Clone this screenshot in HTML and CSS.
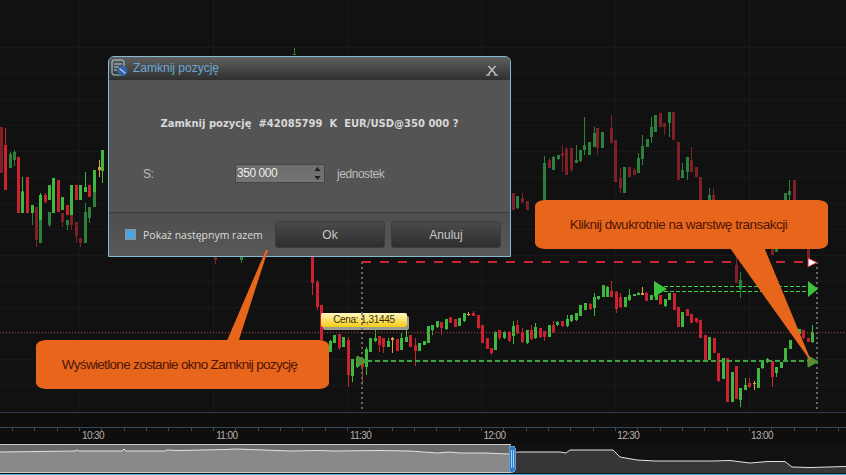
FILE: index.html
```html
<!DOCTYPE html>
<html lang="pl">
<head>
  <meta charset="UTF-8">
  <title>Zamknij pozycję</title>
  <link rel="stylesheet" href="styles.css">
</head>
<body>

  <svg class="chart" id="chart" width="846" height="475" viewBox="0 0 846 475">
    <g id="grid"></g>
    <g id="candles"></g>

    <line class="price-line" x1="0" y1="332.5" x2="846" y2="332.5"/>
    <line class="drop-line" x1="362" y1="262" x2="362" y2="412"/>
    <line class="drop-line" x1="817" y1="262" x2="817" y2="412"/>
    <line class="stop-line" x1="362" y1="262" x2="808" y2="262"/>
    <line class="open-line" x1="367" y1="360.5" x2="808" y2="360.5"/>
    <line class="limit-line" x1="664" y1="286.5" x2="808" y2="286.5"/>
    <line class="limit-line" x1="664" y1="291" x2="808" y2="291"/>

    <polygon class="arrow-white" points="808,258 817,262.5 808,267"/>
    <polygon class="arrow-bright" points="654,281 667,289 654,297"/>
    <polygon class="arrow-bright" points="808,281 818,289 808,297"/>
    <polygon class="arrow-olive" points="808,356 818,361.5 808,367"/>
    <polygon class="arrow-olive" points="357,356 367,361 357,367"/>

    <g id="axis"></g>

    <path class="overview-dark" id="overviewDark" d=""/>
    <rect class="overview-top" x="0" y="444" width="511" height="28"/>
    <path class="overview-light" id="overviewLight" d=""/>
    <path class="overview-line" id="overviewLine" d=""/>
    <line class="overview-edge" x1="0" y1="444.5" x2="511" y2="444.5"/>
    <line class="overview-edge" x1="0" y1="472.5" x2="511" y2="472.5"/>
    <line class="overview-bottom" x1="0" y1="474.5" x2="846" y2="474.5"/>

    <rect class="handle" x="509" y="446" width="6" height="26" rx="2"/>
    <line class="handle-grip" x1="511" y1="450" x2="511" y2="468"/>
    <line class="handle-grip" x1="513" y1="450" x2="513" y2="468"/>
  </svg>

  <div class="tooltip">Cena: 1,31445</div>
  <div class="tooltip-cross"></div>

  <div class="dialog">
    <div class="dialog-title">
      <svg class="dialog-icon" width="18" height="18" viewBox="0 0 18 18">
        <rect x="1" y="1" width="12" height="15" rx="2" fill="none" stroke="#a9cfe0" stroke-width="1"/>
        <path d="M3 5h8M3 8h5M3 11h3" stroke="#a9cfe0" stroke-width="1"/>
        <circle cx="11.5" cy="12" r="5" fill="#2f63a8"/>
        <path d="M8.5 9.5l6 5" stroke="#b9d4ea" stroke-width="1.2"/>
      </svg>
      <span class="dialog-name">Zamknij pozycję</span>
      <svg class="dialog-close" width="12" height="11" viewBox="0 0 12 11">
        <path d="M2.5 1l7 8M9.5 1l-7 8" stroke="#bdbdbd" stroke-width="1.5"/>
        <path d="M0 10h4M8 10h4" stroke="#eeeeee" stroke-width="1"/>
      </svg>
    </div>

    <div class="dialog-body">
      <p class="question">Zamknij pozycję&nbsp; #42085799&nbsp; K&nbsp; EUR/USD@350 000 ?</p>
      <div class="amount-row">
        <label class="amount-label">S:</label>
        <div class="spinner">
          <span>350 000</span>
          <svg class="spinner-arrows" width="7" height="15" viewBox="0 0 7 15">
            <path d="M3.5 1l3 4h-6z" fill="#1f1f1f"/>
            <path d="M3.5 14l3-4h-6z" fill="#1f1f1f"/>
          </svg>
        </div>
        <span class="amount-unit">jednostek</span>
      </div>
    </div>

    <div class="dialog-footer">
      <label class="show-next"><span class="checkbox"></span>Pokaż następnym razem</label>
      <button class="btn">Ok</button>
      <button class="btn">Anuluj</button>
    </div>
  </div>

  <div class="callout callout-left">Wyświetlone zostanie okno Zamknij pozycję</div>
  <div class="callout callout-right">Kliknij dwukrotnie na warstwę transakcji</div>

  <script src="chart.js"></script>
</body>
</html>
```

FILE: styles.css
```css
* {
  box-sizing: border-box;
}

html, body {
  margin: 0;
  padding: 0;
  width: 846px;
  height: 475px;
  overflow: hidden;
  background-color: #111111;
  font-family: "Liberation Sans", Arial, sans-serif;
}

.chart {
  position: absolute;
  left: 0;
  top: 0;
  display: block;
}

.chart rect, .chart line {
  shape-rendering: crispEdges;
}

.grid-line { stroke: #181818; stroke-width: 1; }
.axis-band { fill: #100e0c; }
.axis-line { stroke: #2b3a46; stroke-width: 1; }
.axis-line-bright { stroke: #2f4a5e; stroke-width: 1; }
.axis-tick { stroke: #4a4a4a; stroke-width: 1; }
.axis-label {
  fill: #b0b0b0;
  font-family: "Liberation Sans", Arial, sans-serif;
  font-size: 10px;
  letter-spacing: -0.6px;
  text-anchor: middle;
}

.price-line { stroke: #a8333a; stroke-width: 1; stroke-dasharray: 1 2; }
.drop-line { stroke: #666666; stroke-width: 2; stroke-dasharray: 2 3; }
.stop-line { stroke: #cc2433; stroke-width: 2; stroke-dasharray: 9 9; }
.open-line { stroke: #3ea63e; stroke-width: 2; stroke-dasharray: 5 3; }
.limit-line { stroke: #40d040; stroke-width: 1; stroke-dasharray: 4 2; }

.arrow-white { fill: #ffffff; stroke: #cc2433; stroke-width: 1; }
.arrow-bright { fill: #3cc43c; }
.arrow-olive { fill: #5b8a33; stroke: #3ea63e; stroke-width: 1; }

.overview-dark { fill: #363636; }
.overview-top { fill: #686868; }
.overview-light { fill: #898989; }
.overview-line { fill: none; stroke: #e2e2e2; stroke-width: 1; }
.overview-edge { stroke: #c9c9c9; stroke-width: 1; }
.overview-bottom { stroke: #3fb4dc; stroke-width: 1; }
.handle { fill: #2f7cc4; stroke: #5aa2de; stroke-width: 1; }
.handle-grip { stroke: #a9d0f0; stroke-width: 1; }

.tooltip {
  position: absolute;
  left: 321px;
  top: 313px;
  width: 86px;
  height: 14px;
  border-radius: 2px;
  background: linear-gradient(#fff8c4, #f6cb16);
  box-shadow: 2px 3px 0 #9d9d92;
  color: #3a3000;
  font-size: 10px;
  letter-spacing: -0.3px;
  line-height: 14px;
  text-align: center;
}

.tooltip-cross {
  position: absolute;
  left: 361px;
  top: 313px;
  width: 2px;
  height: 19px;
  background: repeating-linear-gradient(#777777 0 2px, transparent 2px 5px);
}

.dialog {
  position: absolute;
  left: 108px;
  top: 56px;
  width: 403px;
  height: 201px;
  display: flex;
  flex-direction: column;
  border: 1px solid #83bcd2;
  border-radius: 6px 6px 0 0;
  background: #545454;
  overflow: hidden;
}

.dialog-title {
  height: 23px;
  flex-shrink: 0;
  display: flex;
  align-items: center;
  padding: 0 12px 2px 2px;
  background: linear-gradient(#5f5f5f, #2f2f2f);
}

.dialog-icon {
  flex-shrink: 0;
  margin-right: 4px;
}

.dialog-name {
  flex: 1;
  color: #6aa8d2;
  font-size: 12px;
}

.dialog-close {
  margin-top: 6px;
}

.dialog-body {
  flex: 1;
  display: flex;
  flex-direction: column;
}

.question {
  margin: 37px 0 0 0;
  color: #d8d8d8;
  font-family: "DejaVu Sans", sans-serif;
  font-size: 10px;
  font-weight: bold;
  line-height: 14px;
  text-align: center;
}

.amount-row {
  display: flex;
  align-items: center;
  margin-top: 33px;
  padding-left: 34px;
  color: #bdbdbd;
  font-size: 12px;
  letter-spacing: -0.45px;
}

.amount-label {
  width: 92px;
}

.spinner {
  width: 90px;
  height: 19px;
  display: flex;
  align-items: center;
  justify-content: space-between;
  padding: 0 2px 2px 1px;
  background: linear-gradient(#6c6c6c, #747474);
  border: 1px solid #454545;
  color: #ececec;
}

.spinner-arrows {
  margin-top: 2px;
  margin-right: 1px;
}

.amount-unit {
  margin-left: 12px;
}

.dialog-footer {
  height: 44px;
  flex-shrink: 0;
  display: flex;
  align-items: center;
  gap: 6px;
  padding-left: 16px;
  border-top: 1px solid #3a3a3a;
  background: linear-gradient(#4e4e4e, #585858);
}

.show-next {
  width: 144px;
  display: flex;
  align-items: center;
  gap: 7px;
  color: #dcdcdc;
  font-family: "Open Sans", sans-serif;
  font-size: 10.5px;
  white-space: nowrap;
}

.checkbox {
  width: 11px;
  height: 11px;
  flex-shrink: 0;
  border: 2px solid #7a98b0;
  background: #45a5e8;
}

.btn {
  width: 110px;
  height: 27px;
  padding: 0;
  border: 1px solid #3c3c3c;
  border-radius: 3px;
  background: linear-gradient(#4a4a4a, #2e2e2e);
  color: #c8c8c8;
  font-family: "Liberation Sans", Arial, sans-serif;
  font-size: 12px;
}

.callout {
  position: absolute;
  width: 293px;
  height: 49px;
  padding-right: 6px;
  border-radius: 10px / 6px;
  background: #e8651c;
  color: #4d1606;
  font-size: 13.5px;
  line-height: 49px;
  text-align: center;
}

.callout::after {
  content: "";
  position: absolute;
  background: #e8651c;
}

.callout-left {
  left: 36px;
  top: 340px;
  letter-spacing: -0.68px;
}

.callout-left::after {
  left: 190px;
  top: -90px;
  width: 42px;
  height: 91px;
  clip-path: polygon(100% 0, 30% 100%, 2% 100%, 95% 0);
}

.callout-right {
  left: 535px;
  top: 200px;
  letter-spacing: -0.49px;
}

.callout-right::after {
  left: 195px;
  top: 48px;
  width: 82px;
  height: 115px;
  clip-path: polygon(0 0, 42% 0, 100% 100%);
}
```

FILE: chart.js
```js
const SVG_NS = 'http://www.w3.org/2000/svg';

const COLORS = {
  g: '#3fb83f', r: '#cb2131', o: '#e59a45',
  G: '#2c7f3c', R: '#7f2029'
};

// x, high, low, body top, body bottom, colour
const candles = [
  // rear series, dimmed
  [1,127,173,127,173,'R'], [10,152,168,154,168,'G'], [14,150,166,152,160,'G'],
  [22,177,213,191,213,'G'], [32,205,225,205,213,'G'], [36,207,247,207,240,'R'],
  [40,220,243,220,243,'G'], [49,212,227,212,225,'G'], [62,213,227,213,222,'R'],
  [67,220,230,220,225,'G'], [71,215,230,215,225,'R'], [76,222,243,222,236,'R'],
  [80,238,247,238,243,'R'], [85,203,243,212,243,'G'], [89,207,223,207,218,'G'],
  [94,192,207,192,207,'G'], [102,150,183,165,171,'G'], [215,257,264,257,260,'R'],
  [241,257,263,257,260,'G'], [294,48,55,54,55,'G'],
  [513,193,210,193,210,'R'], [517,196,209,196,208,'G'], [522,193,203,198,202,'R'],
  [527,201,210,201,210,'R'], [544,156,200,163,200,'G'], [549,158,168,160,168,'R'],
  [553,156,170,157,170,'G'], [558,155,160,155,159,'G'], [562,145,172,153,156,'R'],
  [566,147,175,149,175,'R'], [571,148,172,148,170,'R'], [576,145,163,160,163,'G'],
  [580,150,162,150,161,'G'], [584,117,155,145,150,'G'], [589,142,155,142,155,'G'],
  [594,127,147,133,147,'G'], [597,128,155,128,148,'R'], [602,132,148,132,148,'G'],
  [611,115,143,128,143,'R'], [615,140,182,140,182,'R'], [620,168,193,178,188,'R'],
  [624,167,193,167,193,'G'], [629,167,177,167,177,'R'], [634,168,175,170,175,'R'],
  [638,153,173,158,173,'G'], [642,135,165,146,159,'G'], [647,139,147,139,147,'G'],
  [651,117,143,127,137,'G'], [655,115,132,115,132,'G'], [660,113,127,113,127,'R'],
  [664,123,135,123,127,'R'], [669,112,137,112,123,'G'], [673,112,140,112,140,'R'],
  [678,142,180,142,180,'R'], [682,163,178,170,178,'G'], [687,157,180,157,172,'G'],
  [691,147,172,160,172,'R'], [696,167,177,167,177,'R'], [700,177,200,177,200,'R'],
  [709,188,200,195,200,'G'], [713,188,200,195,200,'R'], [736,248,283,265,283,'R'],
  [740,272,298,280,289,'G'], [776,248,252,248,252,'G'], [772,248,255,248,255,'R'],
  [808,248,258,248,258,'R'], [785,193,200,193,200,'G'], [789,180,200,191,195,'G'],
  [794,180,200,180,200,'R'],

  // front series
  [5,128,190,145,190,'r'], [18,157,213,157,213,'r'], [22,177,213,192,213,'g'],
  [27,177,213,177,213,'r'], [32,205,213,205,213,'g'], [40,193,220,195,220,'g'],
  [45,193,203,195,202,'r'], [49,185,200,185,200,'g'], [53,178,213,178,213,'g'],
  [58,180,212,180,212,'r'], [62,197,210,197,210,'g'], [67,205,215,205,215,'r'],
  [71,185,215,185,215,'g'], [76,185,200,185,200,'r'], [80,185,200,185,200,'g'],
  [85,172,192,187,192,'g'], [89,185,197,185,197,'r'], [94,170,192,170,192,'g'],
  [99,160,177,167,170,'o'], [102,150,183,150,171,'g'],
  [312,250,295,250,283,'r'], [317,280,310,282,307,'r'], [321,305,340,305,340,'r'],
  [330,340,352,341,352,'g'], [334,335,343,335,343,'g'], [339,334,350,334,348,'r'],
  [343,337,347,337,347,'g'], [348,337,387,340,375,'r'], [352,359,382,359,376,'g'],
  [357,356,368,358,367,'g'], [362,358,385,358,367,'r'], [366,347,375,349,367,'g'],
  [370,338,352,338,352,'g'], [375,330,342,338,341,'g'], [379,336,352,336,345,'r'],
  [383,338,353,338,347,'r'], [388,338,347,341,347,'g'], [392,337,353,338,340,'o'],
  [397,339,351,339,351,'r'], [401,333,350,338,350,'g'], [406,330,342,337,342,'g'],
  [410,335,347,335,347,'r'], [415,338,366,345,351,'r'], [419,343,351,343,351,'g'],
  [424,341,345,341,345,'g'], [428,326,343,326,343,'g'], [432,325,335,325,330,'g'],
  [437,321,328,321,327,'g'], [441,322,335,322,328,'r'], [446,319,330,319,329,'g'],
  [450,317,323,317,323,'r'], [455,319,327,319,327,'r'], [459,318,326,318,326,'g'],
  [464,313,322,313,321,'g'], [468,312,316,314,315,'o'], [473,311,316,313,316,'r'],
  [478,315,329,315,328,'r'], [482,325,343,325,343,'r'], [487,338,349,338,349,'r'],
  [491,348,355,348,353,'r'], [495,331,350,332,350,'g'], [499,330,340,330,338,'r'],
  [504,331,339,332,338,'g'], [509,331,342,332,341,'r'], [513,321,344,326,336,'g'],
  [517,320,335,325,333,'r'], [522,328,343,332,342,'r'], [527,330,344,330,343,'g'],
  [531,325,340,330,339,'r'], [535,323,339,327,338,'g'], [540,328,338,328,337,'r'],
  [544,331,341,331,337,'r'], [549,325,337,325,337,'g'], [553,321,333,325,332,'r'],
  [557,321,326,322,325,'g'], [562,321,327,321,326,'r'], [567,315,327,319,326,'g'],
  [571,315,322,315,321,'g'], [576,313,321,313,320,'g'], [580,305,316,305,316,'g'],
  [585,303,310,303,310,'g'], [590,303,310,304,309,'r'], [594,293,316,297,308,'g'],
  [598,296,300,296,299,'g'], [603,285,297,285,297,'g'], [607,286,297,287,297,'g'],
  [611,281,297,291,297,'r'], [616,291,313,292,309,'r'], [620,293,308,297,307,'r'],
  [625,297,307,297,307,'g'], [629,289,301,295,300,'g'], [634,294,296,294,296,'g'],
  [638,292,295,293,295,'g'], [642,287,295,293,295,'o'], [646,292,301,293,301,'r'],
  [651,295,300,295,300,'g'], [656,290,300,292,300,'g'], [660,295,305,295,304,'r'],
  [665,299,307,299,306,'g'], [669,293,300,293,300,'g'], [674,293,310,293,310,'r'],
  [678,307,327,307,327,'r'], [682,312,327,312,327,'g'], [687,309,316,309,316,'r'],
  [691,314,323,314,323,'r'], [696,318,323,318,322,'r'], [700,320,338,320,338,'r'],
  [705,335,360,335,360,'r'], [709,337,360,337,360,'g'], [714,338,353,338,353,'r'],
  [718,353,382,353,381,'r'], [723,358,379,358,379,'g'], [727,358,402,358,402,'r'],
  [732,372,402,372,402,'g'], [736,366,399,366,399,'r'], [740,388,407,388,400,'g'],
  [745,378,390,385,390,'g'], [749,378,388,383,387,'r'], [754,381,390,383,384,'o'],
  [758,368,388,368,388,'g'], [762,360,369,360,368,'g'], [767,358,363,359,362,'g'],
  [772,361,387,361,377,'r'], [776,367,377,367,373,'g'], [781,362,368,362,368,'g'],
  [785,348,362,348,362,'g'], [790,340,349,340,349,'g'], [799,329,334,329,334,'g'],
  [803,330,339,330,338,'r'], [808,338,342,338,342,'r'], [812,325,343,332,342,'g']
];

const overview = [
  [0,452],[75,451],[77,450],[79,451],[122,451],[124,449],[126,451],[165,451],[167,450],
  [178,450.5],[225,449.5],[235,449],[250,449.5],[290,451],[320,450.5],[335,451],[380,450.5],
  [410,451],[437,453],[450,452],[460,453],[485,453],[508,454],[518,452],[560,452],
  [566,453],[570,450],[613,450],[620,457],[637,460],[655,461],[700,461],[712,461],
  [730,460.5],[750,463],[768,461.5],[785,461.5],[792,467],[810,467.5],[846,466.5]
];

function add(parent, tag, attrs, text) {
  const el = document.createElementNS(SVG_NS, tag);
  for (const key in attrs) el.setAttribute(key, attrs[key]);
  if (text) el.textContent = text;
  parent.appendChild(el);
  return el;
}

function drawGrid() {
  const grid = document.getElementById('grid');
  for (let y = 47; y < 410; y += 26) {
    add(grid, 'line', { class: 'grid-line', x1: 0, y1: y + 0.5, x2: 846, y2: y + 0.5 });
  }
  for (let x = 79; x < 846; x += 134) {
    add(grid, 'line', { class: 'grid-line', x1: x + 0.5, y1: 0, x2: x + 0.5, y2: 412 });
  }
}

function drawCandles() {
  const layer = document.getElementById('candles');
  candles.forEach(function (c) {
    const fill = COLORS[c[5]];
    add(layer, 'rect', { x: c[0], y: c[1], width: 1, height: c[2] - c[1], fill: fill });
    add(layer, 'rect', { x: c[0] - 1, y: c[3], width: 3, height: Math.max(c[4] - c[3], 1), fill: fill });
  });
}

function drawAxis() {
  const axis = document.getElementById('axis');
  add(axis, 'rect', { class: 'axis-band', x: 0, y: 413, width: 846, height: 31 });
  add(axis, 'line', { class: 'axis-line', x1: 0, y1: 412.5, x2: 846, y2: 412.5 });
  add(axis, 'line', { class: 'axis-line-bright', x1: 0, y1: 427.5, x2: 846, y2: 427.5 });

  for (let x = 12; x < 846; x += 22.33) {
    const px = Math.round(x) + 0.5;
    add(axis, 'line', { class: 'axis-tick', x1: px, y1: 428, x2: px, y2: 431 });
  }
  ['10:30', '11:00', '11:30', '12:00', '12:30', '13:00'].forEach(function (label, i) {
    add(axis, 'text', { class: 'axis-label', x: 93 + i * 133.8, y: 439 }, label);
  });
}

function drawOverview() {
  const toPath = function (points) {
    return points.map(function (p, i) { return (i ? 'L' : 'M') + p[0] + ' ' + p[1]; }).join(' ');
  };
  const split = overview.findIndex(function (p) { return p[0] > 511; });
  const left = overview.slice(0, split).concat([[511, 453.5]]);
  const right = [[511, 453.5]].concat(overview.slice(split));

  document.getElementById('overviewLine').setAttribute('d', toPath(overview));
  document.getElementById('overviewLight').setAttribute('d', toPath(left) + ' L511 472 L0 472 Z');
  document.getElementById('overviewDark').setAttribute('d', toPath(right) + ' L846 473 L511 473 Z');
}

drawGrid();
drawCandles();
drawAxis();
drawOverview();
```
